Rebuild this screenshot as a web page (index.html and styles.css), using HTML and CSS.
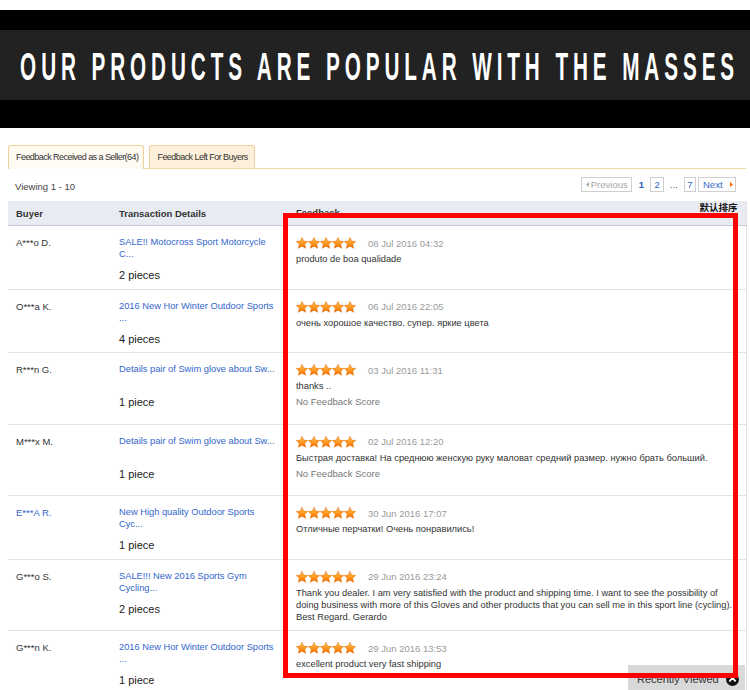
FILE: index.html
```html
<!DOCTYPE html>
<html lang="en">
<head>
<meta charset="utf-8">
<title>Feedback Received as a Seller</title>
<link rel="stylesheet" href="styles.css">
</head>
<body>
<svg class="defs" width="0" height="0" aria-hidden="true">
  <defs>
    <linearGradient id="sg" x1="0" y1="0" x2="0" y2="1">
      <stop offset="0" stop-color="#ffc45a"/>
      <stop offset="0.5" stop-color="#ff9c1e"/>
      <stop offset="1" stop-color="#f06800"/>
    </linearGradient>
    <symbol id="star" viewBox="0 0 12 12">
      <polygon points="6,0.4 7.7,4.1 11.7,4.5 8.7,7.2 9.6,11.3 6,9.2 2.4,11.3 3.3,7.2 0.3,4.5 4.3,4.1" fill="url(#sg)" stroke="#e36a00" stroke-width="0.5" stroke-linejoin="round"/>
    </symbol>
  </defs>
</svg>

<header class="banner">
  <div class="banner-band">
    <h1 class="banner-title">OUR PRODUCTS ARE POPULAR WITH THE MASSES</h1>
  </div>
</header>

<main class="main">
  <nav class="tabs">
    <a class="tab active" href="#">Feedback Received as a Seller(64)</a>
    <a class="tab" href="#">Feedback Left For Buyers</a>
  </nav>

  <div class="toolbar">
    <div class="viewing">Viewing 1 - 10</div>
    <div class="pager">
      <span class="pg prev"><svg class="tri" width="3" height="5" viewBox="0 0 3 5"><polygon points="3,0 0,2.5 3,5" fill="#aaa"/></svg>Previous</span>
      <span class="cur">1</span>
      <a class="pg num" href="#">2</a>
      <span class="dots">...</span>
      <a class="pg num narrow" href="#">7</a>
      <a class="pg next" href="#">Next<svg class="tri" width="3" height="5" viewBox="0 0 3 5"><polygon points="0,0 3,2.5 0,5" fill="#f60"/></svg></a>
    </div>
  </div>

  <table class="fb">
    <colgroup>
      <col class="c-buyer">
      <col class="c-trans">
      <col class="c-feed">
    </colgroup>
    <thead>
      <tr>
        <th>Buyer</th>
        <th>Transaction Details</th>
        <th><div class="fb-head"><span class="fb-label">Feedback</span><a class="sort" href="#">默认排序</a></div></th>
      </tr>
    </thead>
    <tbody>
      <tr>
        <td class="buyer">A***o D.</td>
        <td><a class="item" href="#">SALE!! Motocross Sport Motorcycle C...</a><div class="qty">2 pieces</div></td>
        <td>
          <div class="rating"><svg class="stars" width="60" height="12" viewBox="0 0 60 12"><use href="#star" x="0" width="12" height="12"/><use href="#star" x="12" width="12" height="12"/><use href="#star" x="24" width="12" height="12"/><use href="#star" x="36" width="12" height="12"/><use href="#star" x="48" width="12" height="12"/></svg><span class="date">08 Jul 2016 04:32</span></div>
          <p class="fb-text">produto de boa qualidade</p>
        </td>
      </tr>
      <tr>
        <td class="buyer">O***a K.</td>
        <td><a class="item" href="#">2016 New Hor Winter Outdoor Sports ...</a><div class="qty">4 pieces</div></td>
        <td>
          <div class="rating"><svg class="stars" width="60" height="12" viewBox="0 0 60 12"><use href="#star" x="0" width="12" height="12"/><use href="#star" x="12" width="12" height="12"/><use href="#star" x="24" width="12" height="12"/><use href="#star" x="36" width="12" height="12"/><use href="#star" x="48" width="12" height="12"/></svg><span class="date">06 Jul 2016 22:05</span></div>
          <p class="fb-text">очень хорошое качество. супер. яркие цвета</p>
        </td>
      </tr>
      <tr>
        <td class="buyer">R***n G.</td>
        <td><a class="item" href="#">Details pair of Swim glove about Sw...</a><div class="qty">1 piece</div></td>
        <td>
          <div class="rating"><svg class="stars" width="60" height="12" viewBox="0 0 60 12"><use href="#star" x="0" width="12" height="12"/><use href="#star" x="12" width="12" height="12"/><use href="#star" x="24" width="12" height="12"/><use href="#star" x="36" width="12" height="12"/><use href="#star" x="48" width="12" height="12"/></svg><span class="date">03 Jul 2016 11:31</span></div>
          <p class="fb-text">thanks ..</p>
          <p class="nfs">No Feedback Score</p>
        </td>
      </tr>
      <tr>
        <td class="buyer">M***x M.</td>
        <td><a class="item" href="#">Details pair of Swim glove about Sw...</a><div class="qty">1 piece</div></td>
        <td>
          <div class="rating"><svg class="stars" width="60" height="12" viewBox="0 0 60 12"><use href="#star" x="0" width="12" height="12"/><use href="#star" x="12" width="12" height="12"/><use href="#star" x="24" width="12" height="12"/><use href="#star" x="36" width="12" height="12"/><use href="#star" x="48" width="12" height="12"/></svg><span class="date">02 Jul 2016 12:20</span></div>
          <p class="fb-text">Быстрая доставка! На среднюю женскую руку маловат средний размер. нужно брать больший.</p>
          <p class="nfs">No Feedback Score</p>
        </td>
      </tr>
      <tr>
        <td class="buyer"><a class="buyer-link" href="#">E***A R.</a></td>
        <td><a class="item" href="#">New High quality Outdoor Sports Cyc...</a><div class="qty">1 piece</div></td>
        <td>
          <div class="rating"><svg class="stars" width="60" height="12" viewBox="0 0 60 12"><use href="#star" x="0" width="12" height="12"/><use href="#star" x="12" width="12" height="12"/><use href="#star" x="24" width="12" height="12"/><use href="#star" x="36" width="12" height="12"/><use href="#star" x="48" width="12" height="12"/></svg><span class="date">30 Jun 2016 17:07</span></div>
          <p class="fb-text">Отличные перчатки! Очень понравились!</p>
        </td>
      </tr>
      <tr>
        <td class="buyer">G***o S.</td>
        <td><a class="item" href="#">SALE!!! New 2016 Sports Gym Cycling...</a><div class="qty">2 pieces</div></td>
        <td>
          <div class="rating"><svg class="stars" width="60" height="12" viewBox="0 0 60 12"><use href="#star" x="0" width="12" height="12"/><use href="#star" x="12" width="12" height="12"/><use href="#star" x="24" width="12" height="12"/><use href="#star" x="36" width="12" height="12"/><use href="#star" x="48" width="12" height="12"/></svg><span class="date">29 Jun 2016 23:24</span></div>
          <p class="fb-text">Thank you dealer. I am very satisfied with the product and shipping time. I want to see the possibility of doing business with more of this Gloves and other products that you can sell me in this sport line (cycling). Best Regard. Gerardo</p>
        </td>
      </tr>
      <tr>
        <td class="buyer">G***n K.</td>
        <td><a class="item" href="#">2016 New Hor Winter Outdoor Sports ...</a><div class="qty">1 piece</div></td>
        <td>
          <div class="rating"><svg class="stars" width="60" height="12" viewBox="0 0 60 12"><use href="#star" x="0" width="12" height="12"/><use href="#star" x="12" width="12" height="12"/><use href="#star" x="24" width="12" height="12"/><use href="#star" x="36" width="12" height="12"/><use href="#star" x="48" width="12" height="12"/></svg><span class="date">29 Jun 2016 13:53</span></div>
          <p class="fb-text">excellent product very fast shipping</p>
        </td>
      </tr>
    </tbody>
  </table>
</main>

<div class="highlight" aria-hidden="true"></div>

<a class="recent" href="#">Recently Viewed<svg class="recent-icon" width="13" height="13" viewBox="0 0 13 13"><circle cx="6.5" cy="6.5" r="6.5" fill="#111"/><polyline points="3.8,7.8 6.5,5 9.2,7.8" fill="none" stroke="#fff" stroke-width="1.8" stroke-linecap="round" stroke-linejoin="round"/></svg></a>
</body>
</html>
```

FILE: styles.css
```css
html {
  overflow: hidden;
}

body {
  margin: 0;
  padding: 10px 0 0;
  position: relative;
  background: #fff;
  color: #333;
  font-family: "Liberation Sans", Arial, sans-serif;
  font-size: 9.5px;
}

.defs {
  position: absolute;
  width: 0;
  height: 0;
}

/* ---------- banner ---------- */
.banner {
  background: #000;
  padding: 20px 0 28px;
}

.banner-band {
  height: 70px;
  background: #222;
  display: flex;
  align-items: center;
  justify-content: center;
  overflow: hidden;
}

.banner-title {
  margin: 0 -9px 0 0;
  padding-top: 3px;
  color: #fff;
  font-family: "Liberation Sans", Arial, sans-serif;
  font-weight: 700;
  font-size: 38px;
  line-height: 1;
  letter-spacing: 9px;
  white-space: nowrap;
  transform: scaleX(0.545);
}

/* ---------- main ---------- */
.main {
  padding: 17px 4px 0 8px;
}

.tabs {
  display: flex;
  align-items: flex-end;
  gap: 5px;
  height: 23px;
  border-bottom: 1px solid #f3d6a6;
}

.tab {
  box-sizing: border-box;
  height: 23px;
  padding: 0 6px 0 7px;
  border: 1px solid #efcf9c;
  border-bottom: 0;
  border-radius: 3px 3px 0 0;
  background: #fdf0da;
  color: #333;
  font-size: 9px;
  letter-spacing: -0.55px;
  line-height: 22px;
  text-decoration: none;
  white-space: nowrap;
}

.tab.active {
  height: 24px;
  margin-bottom: -1px;
  padding: 0 5px 0 7px;
  background: #fffaf2;
}

.toolbar {
  display: flex;
  justify-content: space-between;
  align-items: flex-start;
  height: 32px;
  padding: 0 10px 0 7px;
}

.viewing {
  margin-top: 11px;
  line-height: 14px;
  color: #444;
}

.pager {
  display: flex;
  align-items: center;
  margin-top: 8px;
  font-size: 9.5px;
}

.pg {
  box-sizing: border-box;
  height: 15px;
  display: flex;
  align-items: center;
  border: 1px solid #cfcfcf;
  background: #fff;
  color: #36c;
  text-decoration: none;
}

.prev {
  width: 51px;
  padding-left: 4px;
  gap: 2px;
  color: #a5a5a5;
}

.cur {
  margin: 0 6px 0 7px;
  color: #2a5db0;
  font-weight: 700;
}

.num {
  width: 14px;
  justify-content: center;
}

.num.narrow {
  width: 12px;
}

.dots {
  margin: 0 6px;
  color: #555;
}

.next {
  width: 38px;
  margin-left: 2px;
  padding-left: 4px;
  gap: 7px;
}

/* ---------- table ---------- */
.fb {
  width: 738px;
  table-layout: fixed;
  border-collapse: collapse;
  border-right: 1px solid #e3e3e3;
}

.c-buyer { width: 103px; }
.c-trans { width: 177px; }
.c-feed { width: 458px; }

.fb th {
  height: 24px;
  padding: 0 8px;
  background: #e9ebf2;
  border-bottom: 1px solid #c6c9d8;
  color: #333;
  font-size: 9.5px;
  font-weight: 700;
  text-align: left;
  vertical-align: middle;
}

.fb-head {
  display: flex;
  justify-content: space-between;
  align-items: flex-start;
  height: 24px;
}

.fb-label {
  padding-top: 6px;
  line-height: 12px;
}

.sort {
  margin-top: 1px;
  color: #111;
  font-family: "Noto Sans CJK SC", "Liberation Sans", sans-serif;
  font-size: 9.5px;
  font-weight: 700;
  line-height: 10px;
  text-decoration: none;
}

.fb td {
  padding: 10px 8px 7.5px;
  border-bottom: 1px solid #e4e4e4;
  vertical-align: top;
}

.buyer {
  line-height: 14px;
  color: #333;
}

.buyer-link {
  color: #36c;
  text-decoration: none;
}

.item {
  display: block;
  height: 24px;
  overflow: hidden;
  color: #36c;
  font-size: 9.3px;
  line-height: 12px;
  text-decoration: none;
}

.qty {
  margin-top: 9px;
  color: #222;
  font-size: 11px;
  line-height: 12px;
}

.rating {
  display: flex;
  align-items: center;
  gap: 12px;
  height: 14px;
}

.stars {
  display: block;
}

.date {
  color: #9a9a9a;
}

.fb-text {
  margin: 3px 0 0;
  font-size: 9.3px;
  line-height: 12px;
  color: #333;
}

.nfs {
  margin: 4px 0 8px;
  line-height: 12px;
  color: #777;
}

/* ---------- overlays ---------- */
.highlight {
  position: absolute;
  left: 283px;
  top: 213px;
  width: 455px;
  height: 465px;
  box-sizing: border-box;
  border: 5px solid #ff0000;
  z-index: 2;
  pointer-events: none;
}

.recent {
  position: fixed;
  right: 5px;
  bottom: 0;
  z-index: 1;
  box-sizing: border-box;
  width: 117px;
  height: 25px;
  padding: 3px 0 0 9px;
  display: flex;
  align-items: center;
  gap: 7px;
  background: #d9d9d9;
  color: #333;
  font-size: 11px;
  text-decoration: none;
}

.recent-icon {
  display: block;
}
```
